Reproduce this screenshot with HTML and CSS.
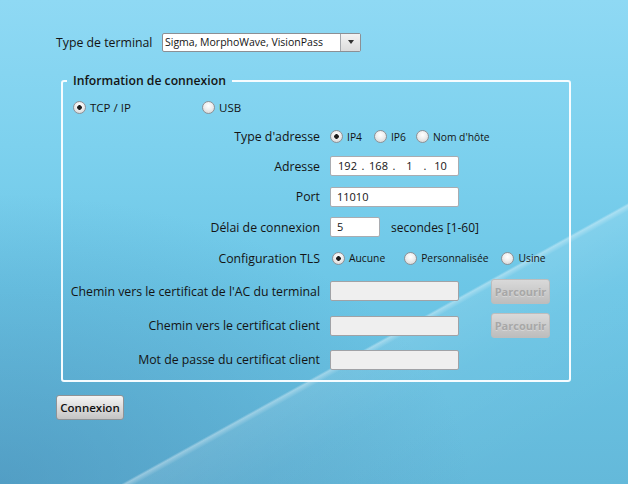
FILE: index.html
```html
<!DOCTYPE html>
<html lang="fr">
<head>
<meta charset="utf-8">
<title>Connexion au terminal</title>
<link rel="stylesheet" href="styles.css">
</head>
<body>
<div class="page">
  <div class="terminal-row">
    <span class="label">Type de terminal</span>
    <div class="combo">
      <span class="combo-text">Sigma, MorphoWave, VisionPass</span>
      <span class="combo-btn"><span class="arrow"></span></span>
    </div>
  </div>

  <fieldset class="group">
    <legend class="legend">Information de connexion</legend>
    <div class="mode-row">
      <label class="opt mode-tcp"><input type="radio" class="radio" name="mode" checked><span>TCP / IP</span></label>
      <label class="opt"><input type="radio" class="radio" name="mode"><span>USB</span></label>
    </div>
    <div class="form">
      <span class="flabel">Type d'adresse</span>
      <div class="ctrl">
        <label class="opt small gap-ip4"><input type="radio" class="radio" name="addr" checked><span>IP4</span></label>
        <label class="opt small gap-ip6"><input type="radio" class="radio" name="addr"><span>IP6</span></label>
        <label class="opt small"><input type="radio" class="radio" name="addr"><span>Nom d'hôte</span></label>
      </div>

      <span class="flabel">Adresse</span>
      <div class="ctrl">
        <div class="textbox ip">
          <span class="seg">192</span><span class="dot">.</span>
          <span class="seg">168</span><span class="dot">.</span>
          <span class="seg">1</span><span class="dot">.</span>
          <span class="seg">10</span>
        </div>
      </div>

      <span class="flabel">Port</span>
      <div class="ctrl"><div class="textbox">11010</div></div>

      <span class="flabel">Délai de connexion</span>
      <div class="ctrl"><div class="textbox short">5</div><span class="unit">secondes [1-60]</span></div>

      <span class="flabel">Configuration TLS</span>
      <div class="ctrl tls">
        <label class="opt small gap-aucune"><input type="radio" class="radio" name="tls" checked><span>Aucune</span></label>
        <label class="opt small gap-perso"><input type="radio" class="radio" name="tls"><span>Personnalisée</span></label>
        <label class="opt small"><input type="radio" class="radio" name="tls"><span>Usine</span></label>
      </div>

      <span class="flabel">Chemin vers le certificat de l'AC du terminal</span>
      <div class="ctrl"><div class="textbox disabled"></div><button class="browse" disabled>Parcourir</button></div>

      <span class="flabel">Chemin vers le certificat client</span>
      <div class="ctrl"><div class="textbox disabled"></div><button class="browse" disabled>Parcourir</button></div>

      <span class="flabel">Mot de passe du certificat client</span>
      <div class="ctrl"><div class="textbox disabled"></div></div>
    </div>
  </fieldset>

  <button class="connect">Connexion</button>
</div>
</body>
</html>
```

FILE: styles.css
```css
html, body {
  margin: 0;
  padding: 0;
}

body {
  width: 628px;
  height: 484px;
  overflow: hidden;
  font-family: "Open Sans", "Noto Sans", sans-serif;
  font-size: 11.5px;
  color: #141414;
  background:
    linear-gradient(151deg, transparent 66.2%, rgba(255,255,255,0.38) 66.5%, rgba(255,255,255,0.10) 67.2%, rgba(255,255,255,0.04) 75%, transparent 90%),
    radial-gradient(ellipse 75% 60% at 0% 100%, rgba(60,125,170,0.45), transparent 100%),
    linear-gradient(180deg, #8fd9f4 0%, #7dd1ee 30%, #6cc6e6 60%, #64b9da 100%);
}

.page {
  padding: 32px 0 0 56px;
}

.terminal-row {
  display: flex;
  align-items: center;
  height: 20px;
}

.label {
  width: 106px;
  font-size: 12.3px;
}

.combo {
  display: flex;
  width: 197px;
  height: 17px;
  border: 1px solid #8c8f94;
  border-radius: 2px;
  background: #fff;
}

.combo-text {
  flex: 1;
  padding-left: 2px;
  font-size: 10.5px;
  line-height: 17px;
  white-space: nowrap;
}

.combo-btn {
  width: 19px;
  border-left: 1px solid #a5a8ad;
  background: linear-gradient(#f3f3f3, #dcdcdc);
  display: flex;
  align-items: center;
  justify-content: center;
}

.arrow {
  width: 0;
  height: 0;
  border-left: 3.5px solid transparent;
  border-right: 3.5px solid transparent;
  border-top: 4px solid #333;
}

.group {
  margin: 21px 0 0 5px;
  width: 506px;
  height: 305px;
  padding: 0;
  border: 2px solid #f6fcff;
  border-radius: 3px;
  box-sizing: content-box;
}

.legend {
  margin-left: 4px;
  padding: 0 6px;
  font-size: 12.2px;
  font-weight: 600;
  line-height: 16px;
}

.mode-row {
  display: flex;
  align-items: center;
  height: 30px;
  margin-top: 3px;
  padding-left: 10px;
}

.mode-tcp {
  width: 129px;
}

.opt {
  display: inline-flex;
  align-items: center;
  gap: 4px;
  white-space: nowrap;
}

.opt.small {
  font-size: 10.3px;
}

.radio {
  appearance: none;
  -webkit-appearance: none;
  margin: 0;
  width: 13px;
  height: 13px;
  border-radius: 50%;
  border: 1px solid #8e9196;
  box-sizing: border-box;
  background: radial-gradient(circle at 50% 35%, #ffffff 0%, #eeeeee 45%, #cfcfcf 100%);
  flex: none;
}

.radio:checked {
  background:
    radial-gradient(circle, #1e1e1e 0 2px, transparent 2.6px),
    radial-gradient(circle at 50% 35%, #ffffff 0%, #eeeeee 45%, #cfcfcf 100%);
}

.gap-ip4 { margin-right: 12px; }
.gap-ip6 { margin-right: 10px; }
.gap-aucune { margin-right: 19px; }
.gap-perso { margin-right: 13px; }
.tls { padding-left: 2px; }

.form {
  display: grid;
  grid-template-columns: 257px 1fr;
  grid-template-rows: 29px 30px 31px 30px 32px 34px 35px 33px;
  column-gap: 10px;
  align-items: center;
}

.flabel {
  text-align: right;
  font-size: 12.3px;
  white-space: nowrap;
}

.ctrl {
  display: flex;
  align-items: center;
}

.textbox {
  height: 18px;
  border: 1px solid #a9acb1;
  border-radius: 2px;
  background: #fff;
  font-size: 11px;
  line-height: 18px;
  padding-left: 6px;
  box-sizing: content-box;
  width: 121px;
}

.textbox.short {
  width: 42px;
}

.textbox.disabled {
  background: #efefef;
  border-color: #a0a2a6;
}

.unit {
  margin-left: 11px;
  font-size: 12px;
}

.ip {
  display: flex;
  padding-left: 5px;
  width: 122px;
}

.seg {
  width: 23px;
  text-align: center;
}

.dot {
  width: 8px;
  text-align: center;
}

.browse {
  margin-left: 32px;
  width: 59px;
  height: 25px;
  padding: 0;
  border: 1px solid #bdbdbd;
  border-radius: 3px;
  background: linear-gradient(#d9d9d9, #bdbdbd);
  color: #a7a7a7;
  font-family: inherit;
  font-size: 11px;
  font-weight: 700;
  text-shadow: 0 1px 0 rgba(255,255,255,0.3);
}

.connect {
  display: block;
  margin-top: 13px;
  width: 68px;
  height: 25px;
  padding: 0;
  border: 1px solid #8f9396;
  border-radius: 3px;
  background: linear-gradient(#f4f4f4, #dcdcdc 50%, #c4c4c4);
  color: #111;
  font-family: inherit;
  font-size: 11.5px;
  font-weight: 600;
}
```
